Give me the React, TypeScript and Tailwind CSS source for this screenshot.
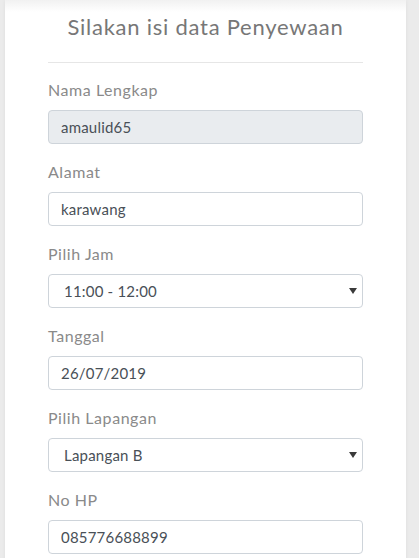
const fields = [
  { label: "Nama Lengkap", value: "amaulid65", type: "disabled" },
  { label: "Alamat", value: "karawang", type: "input" },
  { label: "Pilih Jam", value: "11:00 - 12:00", type: "select" },
  { label: "Tanggal", value: "26/07/2019", type: "input" },
  { label: "Pilih Lapangan", value: "Lapangan B", type: "select" },
  { label: "No HP", value: "085776688899", type: "input" },
];

const Field = ({ label, value, type }: { label: string; value: string; type: string }) => {
  return (
    <div className="mt-[16px]">
      <label className="block text-[16px] leading-[22px] pb-[2px] tracking-[0.55px] text-[#8a8a8a]">
        {label}
      </label>
      <div className="relative mt-[7px]">
        {type === "select" ? (
          <>
            <select
              className="block w-full h-[34px] appearance-none rounded-[4px] border border-[#ced4da] bg-white pl-[15px] text-[15px] tracking-[0.2px] text-[#495057] outline-none"
              defaultValue={value}
            >
              <option>{value}</option>
            </select>
            <svg
              className="pointer-events-none absolute right-[6px] top-[14px]"
              width="8"
              height="6"
              viewBox="0 0 8 6"
            >
              <path d="M0 0h8L4 6z" fill="#3a3a3a" />
            </svg>
          </>
        ) : (
          <input
            readOnly
            value={value}
            className={`block w-full h-[34px] rounded-[4px] border border-[#ced4da] pl-[12px] text-[15px] tracking-[0.2px] text-[#495057] outline-none ${
              type === "disabled" ? "bg-[#e9ecef]" : "bg-white"
            }`}
          />
        )}
      </div>
    </div>
  );
};

export default function App() {
  return (
    <div className="min-h-[558px] bg-[#ebebeb] font-['Lato',sans-serif]">
      <div className="ml-[5px] w-[401px] min-h-[558px] bg-white bg-[linear-gradient(#f1f1f1,#ffffff_12px)] shadow-[0_0_4px_rgba(0,0,0,0.06)] px-[43px] pt-[12px] pb-[20px]">
        <h2 className="text-center text-[22px] leading-[30px] tracking-[0.75px] text-[#777777]">
          Silakan isi data Penyewaan
        </h2>
        <hr className="mt-[20px] border-0 border-t border-[#e6e6e6]" />
        <div className="flex flex-col gap-[1px]">
          {fields.map((f, i) => (
            <Field key={i} {...f} />
          ))}
        </div>
      </div>
    </div>
  );
}
